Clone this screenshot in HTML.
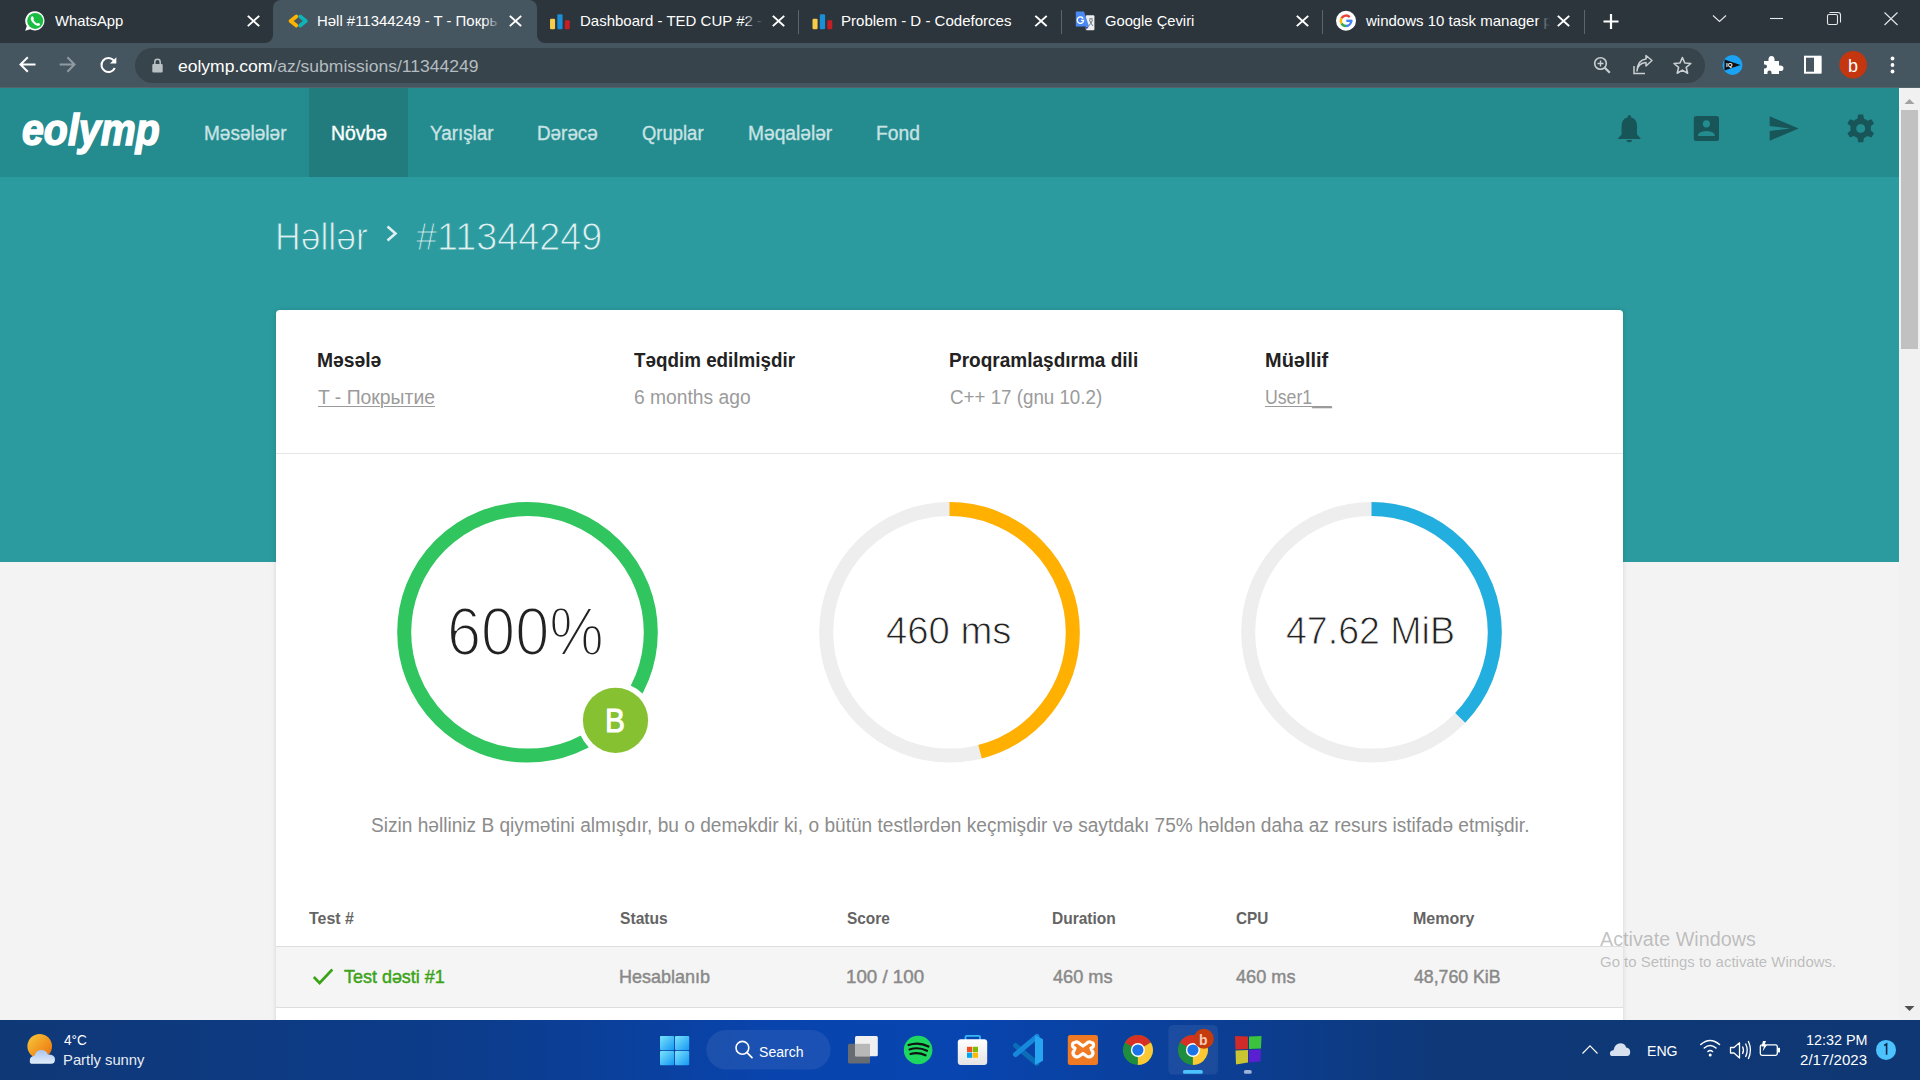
<!DOCTYPE html>
<html><head><meta charset="utf-8">
<style>
*{margin:0;padding:0;box-sizing:border-box}
html,body{width:1920px;height:1080px;overflow:hidden;background:#f3f3f3;font-family:"Liberation Sans",sans-serif;position:relative}
.a{position:absolute}
.t{position:absolute;white-space:nowrap;line-height:1;transform-origin:0 0}
.sep{position:absolute;top:10px;width:1px;height:24px;background:#5b666c}
svg{position:absolute;overflow:visible}

</style></head><body>
<!-- tab strip -->
<div class="a" style="left:0;top:0;width:1920px;height:43px;background:#2c353b"></div>
<div class="a" style="left:273px;top:0;width:264px;height:43px;background:#465660;border-radius:8px 8px 0 0"></div>
<div class="sep" style="left:798px"></div>
<div class="sep" style="left:1061px"></div>
<div class="sep" style="left:1322px"></div>
<div class="sep" style="left:1584px"></div>
<!-- toolbar -->
<div class="a" style="left:0;top:43px;width:1920px;height:45px;background:#465660"></div>
<div class="a" style="left:135px;top:48px;width:1570px;height:35px;border-radius:17.5px;background:#37444b"></div>
<div class="a" style="left:0;top:87px;width:1920px;height:1px;background:#56646b"></div>
<!-- page -->
<div class="a" style="left:0;top:88px;width:1899px;height:89px;background:#248b8f"></div>
<div class="a" style="left:309px;top:88px;width:99px;height:89px;background:#227c7e"></div>
<div class="a" style="left:0;top:177px;width:1899px;height:385px;background:#2b9b9f"></div>
<div class="a" style="left:276px;top:310px;width:1347px;height:720px;background:#fff;border-radius:4px;box-shadow:0 0 5px rgba(0,0,0,.13)"></div>
<div class="a" style="left:276px;top:453px;width:1347px;height:1px;background:#e6e6e6"></div>
<div class="a" style="left:276px;top:946px;width:1347px;height:62px;background:#f5f5f5;border-top:1px solid #dedede;border-bottom:1px solid #dedede"></div>
<!-- scrollbar -->
<div class="a" style="left:1899px;top:88px;width:21px;height:932px;background:#f1f1f1"></div>
<div class="a" style="left:1901px;top:110px;width:17px;height:239px;background:#c1c1c1"></div>
<!-- circles -->
<svg style="left:0;top:0" width="1920" height="1080">
  <circle cx="527.5" cy="632.3" r="123.3" fill="none" stroke="#30c55e" stroke-width="14"/>
  <circle cx="949.5" cy="632.3" r="123.3" fill="none" stroke="#eeeeee" stroke-width="14"/>
  <circle cx="949.5" cy="632.3" r="123.3" fill="none" stroke="#ffb000" stroke-width="14" stroke-dasharray="356.3 1000" transform="rotate(-90 949.5 632.3)"/>
  <circle cx="1371.5" cy="632.3" r="123.3" fill="none" stroke="#eeeeee" stroke-width="14"/>
  <circle cx="1371.5" cy="632.3" r="123.3" fill="none" stroke="#22afdf" stroke-width="14" stroke-dasharray="288.2 1000" transform="rotate(-90 1371.5 632.3)"/>
  <circle cx="615.5" cy="720.3" r="38" fill="#fff"/>
  <circle cx="615.5" cy="720.3" r="32.6" fill="#86c131"/>
</svg>
<!-- taskbar -->
<div class="a" style="left:0;top:1020px;width:1920px;height:60px;background:linear-gradient(90deg,#0f3876 0%,#0c3c8c 25%,#0944ad 40%,#0845b0 50%,#0b3f98 62%,#0e3878 75%,#0f3773 100%)"></div>

<div class="t" id="tb1" style="left:55.00px;top:13.30px;font-size:15px;color:#fff;font-weight:normal;transform:scaleX(0.9876);">WhatsApp</div>
<div class="t" id="tb2" style="left:317.00px;top:13.30px;font-size:15px;color:#fff;font-weight:normal;transform:scaleX(0.9954);">Həll #11344249 - T - Покрь</div>
<div class="t" id="tb3" style="left:580.00px;top:13.30px;font-size:15px;color:#fff;font-weight:normal;">Dashboard - TED CUP #2 - C</div>
<div class="t" id="tb4" style="left:841.00px;top:13.30px;font-size:15px;color:#fff;font-weight:normal;transform:scaleX(1.0026);">Problem - D - Codeforces</div>
<div class="t" id="tb5" style="left:1105.00px;top:13.30px;font-size:15px;color:#fff;font-weight:normal;transform:scaleX(0.9830);">Google Çeviri</div>
<div class="t" id="tb6" style="left:1366.00px;top:13.30px;font-size:15px;color:#fff;font-weight:normal;">windows 10 task manager pr</div>
<div class="t" id="url" style="left:178.00px;top:58.76px;font-size:16px;color:#fff;font-weight:normal;transform:scaleX(1.0943);">eolymp.com<span style="color:#b4bcc0">/az/submissions/11344249</span></div>
<div class="t" id="logo" style="left:21.91px;top:108.05px;font-size:44px;color:#fff;font-weight:bold;font-style:italic;transform:scaleX(0.8938);-webkit-text-stroke:1.6px #fff">eolymp</div>
<div class="t" id="n1" style="left:203.72px;top:124.29px;font-size:19.5px;color:#c9e3e4;font-weight:normal;transform:scaleX(0.9757);-webkit-text-stroke:0.35px #c9e3e4">Məsələlər</div>
<div class="t" id="n2" style="left:330.70px;top:124.29px;font-size:19.5px;color:#fff;font-weight:normal;transform:scaleX(0.9959);-webkit-text-stroke:0.35px #fff">Növbə</div>
<div class="t" id="n3" style="left:430.00px;top:124.29px;font-size:19.5px;color:#c9e3e4;font-weight:normal;transform:scaleX(0.9661);-webkit-text-stroke:0.35px #c9e3e4">Yarışlar</div>
<div class="t" id="n4" style="left:537.33px;top:124.29px;font-size:19.5px;color:#c9e3e4;font-weight:normal;transform:scaleX(0.9670);-webkit-text-stroke:0.35px #c9e3e4">Dərəcə</div>
<div class="t" id="n5" style="left:642.30px;top:124.29px;font-size:19.5px;color:#c9e3e4;font-weight:normal;transform:scaleX(0.9462);-webkit-text-stroke:0.35px #c9e3e4">Qruplar</div>
<div class="t" id="n6" style="left:748.02px;top:124.29px;font-size:19.5px;color:#c9e3e4;font-weight:normal;transform:scaleX(0.9832);-webkit-text-stroke:0.35px #c9e3e4">Məqalələr</div>
<div class="t" id="n7" style="left:876.31px;top:124.29px;font-size:19.5px;color:#c9e3e4;font-weight:normal;transform:scaleX(0.9859);-webkit-text-stroke:0.35px #c9e3e4">Fond</div>
<div class="t" id="bc1" style="left:274.77px;top:216.99px;font-size:39px;color:#dff0f0;font-weight:normal;transform:scaleX(0.9103);-webkit-text-stroke:1px #2b9b9f">Həllər</div>
<div class="t" id="bc2" style="left:416.00px;top:216.99px;font-size:39px;color:#dff0f0;font-weight:normal;transform:scaleX(0.9679);-webkit-text-stroke:1px #2b9b9f">#11344249</div>
<div class="t" id="l1" style="left:316.51px;top:351.49px;font-size:19.5px;color:#222;font-weight:bold;transform:scaleX(0.9892);">Məsələ</div>
<div class="t" id="l2" style="left:633.70px;top:351.49px;font-size:19.5px;color:#222;font-weight:bold;transform:scaleX(0.9649);">Təqdim edilmişdir</div>
<div class="t" id="l3" style="left:948.82px;top:351.49px;font-size:19.5px;color:#222;font-weight:bold;transform:scaleX(0.9753);">Proqramlaşdırma dili</div>
<div class="t" id="l4" style="left:1264.58px;top:351.49px;font-size:19.5px;color:#222;font-weight:bold;transform:scaleX(1.0236);">Müəllif</div>
<div class="t" id="v1" style="left:317.50px;top:388.49px;font-size:19.5px;color:#9b9b9b;font-weight:normal;transform:scaleX(0.9930);text-decoration:underline;text-decoration-thickness:1px;text-underline-offset:2px">T - Покрытие</div>
<div class="t" id="v2" style="left:633.70px;top:388.49px;font-size:19.5px;color:#9b9b9b;font-weight:normal;transform:scaleX(0.9872);">6 months ago</div>
<div class="t" id="v3" style="left:949.80px;top:388.49px;font-size:19.5px;color:#9b9b9b;font-weight:normal;transform:scaleX(0.9615);">C++ 17 (gnu 10.2)</div>
<div class="t" id="v4" style="left:1264.69px;top:388.49px;font-size:19.5px;color:#9b9b9b;font-weight:normal;transform:scaleX(0.9071);text-decoration:underline;text-decoration-thickness:1px;text-underline-offset:2px">User1__</div>
<div class="t" id="c1" style="left:446.69px;top:597.44px;font-size:68px;color:#222;font-weight:normal;transform:scaleX(0.9017);-webkit-text-stroke:2.2px #fff">600%</div>
<div class="t" id="c2" style="left:885.50px;top:610.99px;font-size:39px;color:#222;font-weight:normal;transform:scaleX(0.9812);-webkit-text-stroke:0.9px #fff">460 ms</div>
<div class="t" id="c3" style="left:1285.80px;top:610.99px;font-size:39px;color:#222;font-weight:normal;transform:scaleX(0.9621);-webkit-text-stroke:0.9px #fff">47.62 MiB</div>
<div class="t" id="badge" style="left:605.39px;top:704.27px;font-size:33px;color:#fff;font-weight:normal;transform:scaleX(0.9053);-webkit-text-stroke:1px #fff">B</div>
<div class="t" id="sent" style="left:370.90px;top:816.49px;font-size:19.5px;color:#8c8c8c;font-weight:normal;transform:scaleX(0.9797);">Sizin həlliniz B qiymətini almışdır, bu o deməkdir ki, o bütün testlərdən keçmişdir və saytdakı 75% həldən daha az resurs istifadə etmişdir.</div>
<div class="t" id="h1" style="left:309.40px;top:910.96px;font-size:16.7px;color:#646464;font-weight:bold;transform:scaleX(0.9558);">Test #</div>
<div class="t" id="h2" style="left:620.20px;top:910.96px;font-size:16.7px;color:#646464;font-weight:bold;transform:scaleX(0.9365);">Status</div>
<div class="t" id="h3" style="left:847.20px;top:910.96px;font-size:16.7px;color:#646464;font-weight:bold;transform:scaleX(0.9241);">Score</div>
<div class="t" id="h4" style="left:1051.97px;top:910.96px;font-size:16.7px;color:#646464;font-weight:bold;transform:scaleX(0.9302);">Duration</div>
<div class="t" id="h5" style="left:1236.00px;top:910.96px;font-size:16.7px;color:#646464;font-weight:bold;transform:scaleX(0.9181);">CPU</div>
<div class="t" id="h6" style="left:1412.74px;top:910.96px;font-size:16.7px;color:#646464;font-weight:bold;transform:scaleX(0.9606);">Memory</div>
<div class="t" id="r1" style="left:343.90px;top:967.64px;font-size:18.5px;color:#3ba317;font-weight:normal;transform:scaleX(0.9703);-webkit-text-stroke:0.45px #3ba317">Test dəsti #1</div>
<div class="t" id="r2" style="left:619.23px;top:967.64px;font-size:18.5px;color:#898989;font-weight:normal;transform:scaleX(0.9729);-webkit-text-stroke:0.45px #898989">Hesablanıb</div>
<div class="t" id="r3" style="left:846.19px;top:967.64px;font-size:18.5px;color:#898989;font-weight:normal;transform:scaleX(1.0123);-webkit-text-stroke:0.45px #898989">100 / 100</div>
<div class="t" id="r4" style="left:1052.90px;top:967.64px;font-size:18.5px;color:#898989;font-weight:normal;transform:scaleX(0.9815);-webkit-text-stroke:0.45px #898989">460 ms</div>
<div class="t" id="r5" style="left:1236.00px;top:967.64px;font-size:18.5px;color:#898989;font-weight:normal;transform:scaleX(0.9799);-webkit-text-stroke:0.45px #898989">460 ms</div>
<div class="t" id="r6" style="left:1413.70px;top:967.64px;font-size:18.5px;color:#898989;font-weight:normal;transform:scaleX(0.9548);-webkit-text-stroke:0.45px #898989">48,760 KiB</div>
<div class="t" id="aw1" style="left:1599.50px;top:929.27px;font-size:20px;color:rgba(120,120,120,.45);font-weight:normal;transform:scaleX(0.9871);">Activate Windows</div>
<div class="t" id="aw2" style="left:1599.50px;top:954.30px;font-size:15px;color:rgba(120,120,120,.45);font-weight:normal;transform:scaleX(0.9974);">Go to Settings to activate Windows.</div>
<div class="t" id="wx1" style="left:64.30px;top:1032.30px;font-size:15px;color:#fff;font-weight:normal;transform:scaleX(0.9076);">4°C</div>
<div class="t" id="wx2" style="left:63.01px;top:1052.30px;font-size:15px;color:#e8ecf4;font-weight:normal;transform:scaleX(0.9874);">Partly sunny</div>
<div class="t" id="srch" style="left:759.30px;top:1043.58px;font-size:15.5px;color:#fff;font-weight:normal;transform:scaleX(0.9074);">Search</div>
<div class="t" id="eng" style="left:1647.36px;top:1043.30px;font-size:15px;color:#fff;font-weight:normal;transform:scaleX(0.9404);">ENG</div>
<div class="t" id="clk1" style="left:1805.74px;top:1032.30px;font-size:15px;color:#fff;font-weight:normal;transform:scaleX(0.9568);">12:32 PM</div>
<div class="t" id="clk2" style="left:1800.00px;top:1052.30px;font-size:15px;color:#fff;font-weight:normal;transform:scaleX(1.0047);">2/17/2023</div>
<!-- tab text fades -->
<div class="a" style="left:484px;top:8px;width:17px;height:26px;background:linear-gradient(90deg,rgba(70,86,96,0),#465660)"></div>
<div class="a" style="left:501px;top:8px;width:35px;height:26px;background:#465660"></div>
<div class="a" style="left:747px;top:8px;width:17px;height:26px;background:linear-gradient(90deg,rgba(44,53,59,0.3),#2c353b)"></div>
<div class="a" style="left:764px;top:8px;width:33px;height:26px;background:#2c353b"></div>
<div class="a" style="left:1538px;top:8px;width:12px;height:26px;background:linear-gradient(90deg,rgba(44,53,59,0.3),#2c353b)"></div>
<div class="a" style="left:1550px;top:8px;width:33px;height:26px;background:#2c353b"></div>
<!-- active tab flares -->
<svg style="left:0;top:0" width="1920" height="90">
  <path d="M265 43 L273 43 L273 35 A8 8 0 0 1 265 43 Z" fill="#465660"/>
  <path d="M545 43 L537 43 L537 35 A8 8 0 0 0 545 43 Z" fill="#465660"/>
  <!-- whatsapp -->
  <path d="M35 11.2 A9.6 9.6 0 1 1 30.2 29.2 L25.2 30.8 L26.8 26 A9.6 9.6 0 0 1 35 11.2 Z" fill="#fff"/>
  <circle cx="35.2" cy="20.9" r="8" fill="#18bd42"/>
  <path d="M31.3 16.8 Q32.3 15.8 33 16.6 L33.9 18.6 Q34 19.2 33.4 19.8 Q34.6 22.4 37 23.5 Q37.6 22.8 38.2 22.9 L40 23.8 Q40.6 24.5 39.4 25.6 Q37.6 26.6 34.4 24.2 Q30.4 20.8 30.8 18 Z" fill="#fff"/>
  <!-- eolymp favicon -->
  <path d="M296.3 16.5 L290.6 21 L296.3 25.5" fill="none" stroke="#fdb400" stroke-width="3.8" stroke-linejoin="round" stroke-linecap="round"/>
  <path d="M300.2 16.5 L305.8 21 L300.2 25.5" fill="none" stroke="#0fb3b8" stroke-width="3.8" stroke-linejoin="round" stroke-linecap="round"/>
  <!-- codeforces bars -->
  <g id="cfb"><rect x="550" y="18.8" width="5.1" height="10.4" rx="1.2" fill="#f6cd4a"/><rect x="557.3" y="14.3" width="5.3" height="14.9" rx="1.2" fill="#1a8ed6"/><rect x="564.8" y="20.3" width="5" height="8.9" rx="1.2" fill="#c61e24"/></g>
  <use href="#cfb" x="262.5"/>
  <!-- google translate -->
  <rect x="1085.8" y="15.2" width="8.6" height="15" rx="1" fill="#eeeeee"/>
  <path d="M1089 19 L1093 19 M1091 18 L1091 19 M1089.5 20 Q1091 24 1093 26 M1092.5 20 Q1091 24 1088.5 26" stroke="#5f6b73" stroke-width="0.9" fill="none"/>
  <path d="M1076.5 11.6 L1084 11.6 L1089 26.6 L1076.5 26.6 Q1075.8 26.6 1075.8 25.9 L1075.8 12.3 Q1075.8 11.6 1076.5 11.6 Z" fill="#4a89f3"/>
  <path d="M1085.5 26.6 L1089 26.6 L1086.5 29.6 Z" fill="#3a4fc8"/>
  <path d="M1083.2 18.6 A3.2 3.2 0 1 0 1083.6 20.4 L1081 20.4" fill="none" stroke="#fff" stroke-width="1.3"/>
  <!-- google G -->
  <circle cx="1346" cy="20.8" r="10" fill="#fff"/>
  <path d="M1346.3 20.8 L1352.4 20.8" stroke="#4285f4" stroke-width="2.4"/>
  <path d="M1351.2 20.8 A5.2 5.2 0 0 1 1346 26" fill="none" stroke="#4285f4" stroke-width="2.4"/>
  <path d="M1346 26 A5.2 5.2 0 0 1 1341.5 23.4" fill="none" stroke="#34a853" stroke-width="2.4"/>
  <path d="M1341.5 23.4 A5.2 5.2 0 0 1 1341.5 18.2" fill="none" stroke="#fbbc05" stroke-width="2.4"/>
  <path d="M1341.5 18.2 A5.2 5.2 0 0 1 1349.7 17.1" fill="none" stroke="#ea4335" stroke-width="2.4"/>
  <!-- close X -->
  <g stroke="#fff" stroke-width="1.9" stroke-linecap="square">
    <path d="M248.5 16.5 L258.5 25.5 M258.5 16.5 L248.5 25.5"/>
    <path d="M510.5 16.5 L520.5 25.5 M520.5 16.5 L510.5 25.5"/>
    <path d="M773.5 16.5 L783.5 25.5 M783.5 16.5 L773.5 25.5"/>
    <path d="M1036 16.5 L1046 25.5 M1046 16.5 L1036 25.5"/>
    <path d="M1297.5 16.5 L1307.5 25.5 M1307.5 16.5 L1297.5 25.5"/>
    <path d="M1558.5 16.5 L1568.5 25.5 M1568.5 16.5 L1558.5 25.5"/>
  </g>
  <!-- plus -->
  <path d="M1611 14 L1611 29 M1603.5 21.5 L1618.5 21.5" stroke="#fff" stroke-width="2.2"/>
  <!-- window controls -->
  <path d="M1713 15.5 L1719.5 21.5 L1726 15.5" fill="none" stroke="#e6e9ea" stroke-width="1.1"/>
  <path d="M1770 18.5 L1783 18.5" stroke="#e6e9ea" stroke-width="1.1"/>
  <rect x="1827.5" y="14.5" width="10" height="10" rx="1.5" fill="none" stroke="#e6e9ea" stroke-width="1.1"/>
  <path d="M1829.5 12.5 L1838 12.5 Q1840.5 12.5 1840.5 15 L1840.5 22.5" fill="none" stroke="#e6e9ea" stroke-width="1.1"/>
  <path d="M1884.5 12.5 L1897.5 25 M1897.5 12.5 L1884.5 25" stroke="#e6e9ea" stroke-width="1.1"/>
  <!-- back/forward/reload -->
  <path d="M35.5 64.5 L20.5 64.5 M27.8 57.3 L20.5 64.5 L27.8 71.8" fill="none" stroke="#fff" stroke-width="2"/>
  <path d="M59.7 64.5 L74.5 64.5 M67.4 57.3 L74.5 64.5 L67.4 71.8" fill="none" stroke="#8f9ba1" stroke-width="2"/>
  <path d="M113.6 60.2 A7 7 0 1 0 114.8 68" fill="none" stroke="#fff" stroke-width="2"/>
  <path d="M116.3 57.2 L116.3 63.5 L110 63.5 Z" fill="#fff"/>
  <!-- lock -->
  <path d="M154.8 64 L154.8 62 A2.7 2.7 0 0 1 160.2 62 L160.2 64" fill="none" stroke="#b9c1c5" stroke-width="1.5"/>
  <rect x="152.3" y="64" width="10.4" height="8.4" rx="1" fill="#b9c1c5"/>
  <!-- zoom -->
  <circle cx="1600.5" cy="63.5" r="5.8" fill="none" stroke="#c8ced1" stroke-width="1.6"/>
  <path d="M1604.8 67.8 L1609.8 72.8" stroke="#c8ced1" stroke-width="2.2"/>
  <path d="M1600.5 60.5 L1600.5 66.5 M1597.5 63.5 L1603.5 63.5" stroke="#c8ced1" stroke-width="1.4"/>
  <!-- share -->
  <path d="M1634 66 L1634 73.5 L1645 73.5" fill="none" stroke="#c8ced1" stroke-width="1.5"/>
  <path d="M1637 71 Q1638 63 1646 62.5 L1646 66 L1652 60.5 L1646 55.5 L1646 59 Q1637.5 60 1637 71 Z" fill="none" stroke="#c8ced1" stroke-width="1.5" stroke-linejoin="round"/>
  <!-- star -->
  <path d="M1682.4 57.5 L1684.8 63 L1690.8 63.5 L1686.2 67.4 L1687.6 73.2 L1682.4 70.1 L1677.2 73.2 L1678.6 67.4 L1674 63.5 L1680 63 Z" fill="none" stroke="#c8ced1" stroke-width="1.6" stroke-linejoin="round"/>
  <!-- IQ ext -->
  <circle cx="1732.5" cy="65" r="10" fill="#1aa3f5"/>
  <path d="M1724.5 59.5 L1740.5 65 L1724.5 70.5 Z" fill="#111"/>
  <text x="1726" y="67.3" font-family="Liberation Sans" font-size="6" font-weight="bold" fill="#fff">IQ</text>
  <!-- puzzle -->
  <path d="M1764 61 L1768.5 61 Q1768 56 1771.5 56 Q1775 56 1774.5 61 L1779 61 L1779 65.5 Q1783.5 65 1783.5 68.2 Q1783.5 71.5 1779 71 L1779 74 L1771.5 74 Q1772 70.5 1769.5 70.5 Q1767 70.5 1767.5 74 L1764 74 L1764 68.5 Q1767 69 1767 66.5 Q1767 64 1764 64.5 Z" fill="#fff"/>
  <!-- sidebar -->
  <rect x="1805" y="56.7" width="15.5" height="16" fill="none" stroke="#fff" stroke-width="2"/>
  <rect x="1814" y="56.7" width="7.3" height="16" fill="#fff"/>
  <!-- profile -->
  <circle cx="1853.2" cy="64.7" r="13.8" fill="#c4360f"/>
  <text x="1848" y="71.5" font-family="Liberation Sans" font-size="18" fill="#fff">b</text>
  <!-- menu dots -->
  <circle cx="1892.5" cy="58.5" r="1.9" fill="#fff"/><circle cx="1892.5" cy="65" r="1.9" fill="#fff"/><circle cx="1892.5" cy="71.5" r="1.9" fill="#fff"/>
</svg>
<!-- nav icons -->
<svg style="left:0;top:0" width="1920" height="200">
  <g fill="#185558">
    <path d="M1629.3 115 Q1631 115 1631 117.2 Q1637 119 1637 126 L1637 134.5 L1640.6 138.5 L1640.6 139 L1618 139 L1618 138.5 L1621.6 134.5 L1621.6 126 Q1621.6 119 1627.6 117.2 Q1627.6 115 1629.3 115 Z"/>
    <path d="M1626.5 140 L1632 140 Q1632 142.2 1629.3 142.2 Q1626.5 142.2 1626.5 140 Z"/>
    <rect x="1693.8" y="116" width="25.2" height="25" rx="2.5"/>
    <path d="M1769.7 116.3 L1798.6 128.5 L1769.7 140.7 L1769.7 131 L1790 128.5 L1769.7 126 Z"/>
    <path fill-rule="evenodd" d="M1858.2 114.6 L1863.2 114.6 L1864 118.8 Q1866 119.5 1867.5 120.7 L1871.5 119.2 L1874 123.5 L1870.8 126.2 Q1871.1 128.4 1870.8 130.6 L1874 133.3 L1871.5 137.6 L1867.5 136.1 Q1866 137.3 1864 138 L1863.2 142.2 L1858.2 142.2 L1857.4 138 Q1855.4 137.3 1853.9 136.1 L1849.9 137.6 L1847.4 133.3 L1850.6 130.6 Q1850.3 128.4 1850.6 126.2 L1847.4 123.5 L1849.9 119.2 L1853.9 120.7 Q1855.4 119.5 1857.4 118.8 Z M1860.7 123.9 A4.5 4.5 0 1 0 1860.71 123.9 Z"/>
  </g>
  <circle cx="1706.4" cy="123.8" r="3.6" fill="#248b8f"/>
  <path d="M1697.8 136 Q1697.8 131.5 1706.4 131 Q1715 131.5 1715 136 Z" fill="#248b8f"/>
  <!-- breadcrumb chevron -->
  <path d="M387.5 226.5 L395.5 233.5 L387.5 240.5" fill="none" stroke="#dff0f0" stroke-width="2.6"/>
  <!-- check -->
</svg>
<svg style="left:0;top:940" width="400" height="60">
  <path d="M313.8 37 L319.6 43 L332.3 29.5" fill="none" stroke="#3ba317" stroke-width="2.6"/>
</svg>
<!-- scrollbar arrows -->
<svg style="left:1899px;top:88px" width="21" height="932">
  <path d="M5.5 16 L10.5 11 L15.5 16 Z" fill="#a3a3a3"/>
  <path d="M5.5 918 L10.5 923 L15.5 918 Z" fill="#505050"/>
</svg>
<!-- taskbar icons -->
<svg style="left:0;top:1020px" width="1920" height="60">
  <defs>
    <linearGradient id="wl" x1="0" y1="0" x2="1" y2="1"><stop offset="0" stop-color="#7ae4fc"/><stop offset="1" stop-color="#1596f3"/></linearGradient>
    <linearGradient id="sun" x1="0" y1="0" x2="1" y2="1"><stop offset="0" stop-color="#f7ca3a"/><stop offset="1" stop-color="#ec6d0c"/></linearGradient>
    <linearGradient id="cld" x1="0" y1="0" x2="0" y2="1"><stop offset="0" stop-color="#a9c4ee"/><stop offset="1" stop-color="#e3eefb"/></linearGradient>
    <linearGradient id="bag" x1="0" y1="0" x2="0" y2="1"><stop offset="0" stop-color="#ffffff"/><stop offset="1" stop-color="#e4e4e4"/></linearGradient>
  </defs>
  <!-- weather -->
  <circle cx="39.7" cy="26.2" r="12.3" fill="url(#sun)"/>
  <path d="M31.5 43.7 Q29.8 43.7 29.8 40.5 Q29.8 36.2 34.5 35.8 Q36 29.8 42 30 Q46.5 30.3 47.8 34.5 Q55 34.5 55 39.5 Q55 43.7 51 43.7 Z" fill="url(#cld)"/>
  <!-- windows logo -->
  <rect x="660" y="16" width="14.2" height="14.2" rx="1" fill="url(#wl)"/>
  <rect x="675" y="16" width="14.2" height="14.2" rx="1" fill="url(#wl)"/>
  <rect x="660" y="31" width="14.2" height="14.2" rx="1" fill="url(#wl)"/>
  <rect x="675" y="31" width="14.2" height="14.2" rx="1" fill="url(#wl)"/>
  <!-- search pill -->
  <rect x="706.3" y="10" width="124.3" height="39.4" rx="19.7" fill="rgba(255,255,255,0.075)"/>
  <circle cx="742.4" cy="27.8" r="6.4" fill="none" stroke="#fff" stroke-width="1.6"/>
  <path d="M746.8 32.4 L752 37.7" stroke="#fff" stroke-width="1.7" stroke-linecap="round"/>
  <!-- task view -->
  <rect x="848" y="23.8" width="22" height="19.8" rx="1.5" fill="#676b72"/>
  <rect x="855" y="16" width="22.8" height="20.3" rx="1.5" fill="#f0f0f0"/>
  <rect x="855" y="23.8" width="15" height="12.5" fill="#b8b8b8"/>
  <!-- spotify -->
  <circle cx="918.1" cy="30" r="14.3" fill="#1ed760"/>
  <path d="M908.5 25 Q919 21.5 928.5 26.5 M909.5 29.5 Q918.5 26.5 927 30.8 M910.5 34 Q918 31.8 925.5 35.3" fill="none" stroke="#111" stroke-width="2.2" stroke-linecap="round"/>
  <!-- store -->
  <path d="M965.5 20.5 L965.5 17 Q965.5 15.9 966.6 15.9 L978.9 15.9 Q980 15.9 980 17 L980 20.5" fill="none" stroke="#35b7f5" stroke-width="1.8"/>
  <rect x="957.8" y="19.3" width="29.4" height="25.6" rx="3" fill="url(#bag)"/>
  <rect x="967" y="26.8" width="5.2" height="5.2" fill="#f25022"/>
  <rect x="972.8" y="26.8" width="5.2" height="5.2" fill="#7fba00"/>
  <rect x="967" y="32.6" width="5.2" height="5.2" fill="#00a4ef"/>
  <rect x="972.8" y="32.6" width="5.2" height="5.2" fill="#ffb900"/>
  <!-- vscode -->
  <path d="M1015.5 25.5 L1037 43.5" stroke="#0a6db5" stroke-width="5" stroke-linecap="round"/>
  <path d="M1015.5 34.5 L1037 16.5" stroke="#1689dc" stroke-width="5" stroke-linecap="round"/>
  <path d="M1035 15.2 L1042.2 18.8 Q1043 19.2 1043 20 L1043 40 Q1043 40.8 1042.2 41.2 L1035 45 Z" fill="#25a5f2"/>
  <!-- xampp -->
  <rect x="1067.8" y="15.1" width="30.2" height="29.8" rx="2.5" fill="#f07a23"/>
  <path d="M1075 22.5 Q1072.5 22.5 1072.5 25 Q1072.5 27.5 1075 28 Q1075 29 1074 30.5 Q1072 33 1074 35.5 Q1076.5 38 1079.5 36 L1083 33.5 L1086.5 36 Q1089.5 38 1092 35.5 Q1094 33 1092 30.5 Q1091 29 1091 28 Q1093.5 27.5 1093.5 25 Q1093.5 22.5 1091 22.5 Q1089 21 1086.5 23.5 L1083 26 L1079.5 23.5 Q1077 21 1075 22.5 Z" fill="none" stroke="#fff" stroke-width="3.2" stroke-linejoin="round"/>
  <!-- chrome 1 -->
  <g id="chr">
    <circle cx="1137.9" cy="30" r="15" fill="#1e8e3e"/>
    <path d="M1137.9 30 L1124.9 22.5 A15 15 0 0 1 1150.9 22.5 Z" fill="#d93025"/>
    <path d="M1137.9 30 L1150.9 22.5 A15 15 0 0 1 1137.9 45 Z" fill="#fcc934"/>
    <circle cx="1137.9" cy="30" r="7" fill="#fff"/>
    <circle cx="1137.9" cy="30" r="5.6" fill="#1a73e8"/>
  </g>
  <!-- active chrome -->
  <rect x="1168.3" y="5" width="49.6" height="49.6" rx="5" fill="rgba(255,255,255,0.07)"/>
  <use href="#chr" x="55"/>
  <circle cx="1203.8" cy="18.8" r="10" fill="#c63b0e"/>
  <text x="1199" y="24.5" font-family="Liberation Sans" font-size="14" font-weight="bold" fill="#f6c9b8">b</text>
  <rect x="1182.9" y="50" width="20" height="3.8" rx="1.9" fill="#4cc2ff"/>
  <!-- last icon -->
  <path d="M1235 16 L1248 16.5 L1248 29 L1235.5 29.5 Z" fill="#cf2b2b"/>
  <path d="M1249 16.5 L1261.5 16 L1261 28.5 L1249 29 Z" fill="#3cc23c"/>
  <path d="M1235.5 30.5 L1248 30 L1248 42.5 L1236 44.5 Z" fill="#c9c431"/>
  <path d="M1249 30 L1261 29.5 L1260.5 41.5 L1249 42.5 Z" fill="#5b1fd2"/>
  <rect x="1243.8" y="50" width="8" height="3.8" rx="1.9" fill="#9fb3d9"/>
  <!-- tray -->
  <path d="M1582.5 33.5 L1590 25.8 L1597.5 33.5" fill="none" stroke="#fff" stroke-width="1.1"/>
  <path d="M1611.5 35.9 Q1609.9 35.9 1609.9 33.6 Q1609.9 30.3 1613.5 30.2 Q1615 23.3 1620.5 23.3 Q1624.8 23.3 1626.2 27.5 Q1630.2 28 1630.2 32 Q1630.2 35.9 1627 35.9 Z" fill="#d6e0ef"/>
  <path d="M1708 31.5 Q1710 29.5 1712.5 31.5 M1704.3 28 Q1710 23 1716 28 M1700.8 24.5 Q1710 16.5 1719.5 24.5" fill="none" stroke="#fff" stroke-width="1.6" stroke-linecap="round"/>
  <circle cx="1710.2" cy="35" r="1.5" fill="#fff"/>
  <path d="M1730.5 27.5 L1734 27.5 L1739.5 22.8 L1739.5 38 L1734 33 L1730.5 33 Z" fill="none" stroke="#fff" stroke-width="1.3" stroke-linejoin="round"/>
  <path d="M1742.5 26.5 Q1744.5 30.3 1742.5 34 M1745.5 23.5 Q1749 30.3 1745.5 37 M1748.3 21 Q1752.5 30.3 1748.3 39" fill="none" stroke="#fff" stroke-width="1.3"/>
  <rect x="1760.3" y="24.8" width="17" height="10.6" rx="1.8" fill="none" stroke="#fff" stroke-width="1.3"/>
  <rect x="1778" y="27.8" width="2" height="4.6" fill="#fff"/>
  <path d="M1763 21 L1761.5 26.5 L1764 26.5 L1762.5 31.5 L1767 25 L1764.5 25 L1766 21 Z" fill="#fff"/>
  <circle cx="1886" cy="29.9" r="10" fill="#4cc2ff"/>
  <path d="M1884.2 25.5 L1886.6 24 L1886.6 34.8" fill="none" stroke="#0d2a4d" stroke-width="1.6"/>
</svg>

</body></html>
